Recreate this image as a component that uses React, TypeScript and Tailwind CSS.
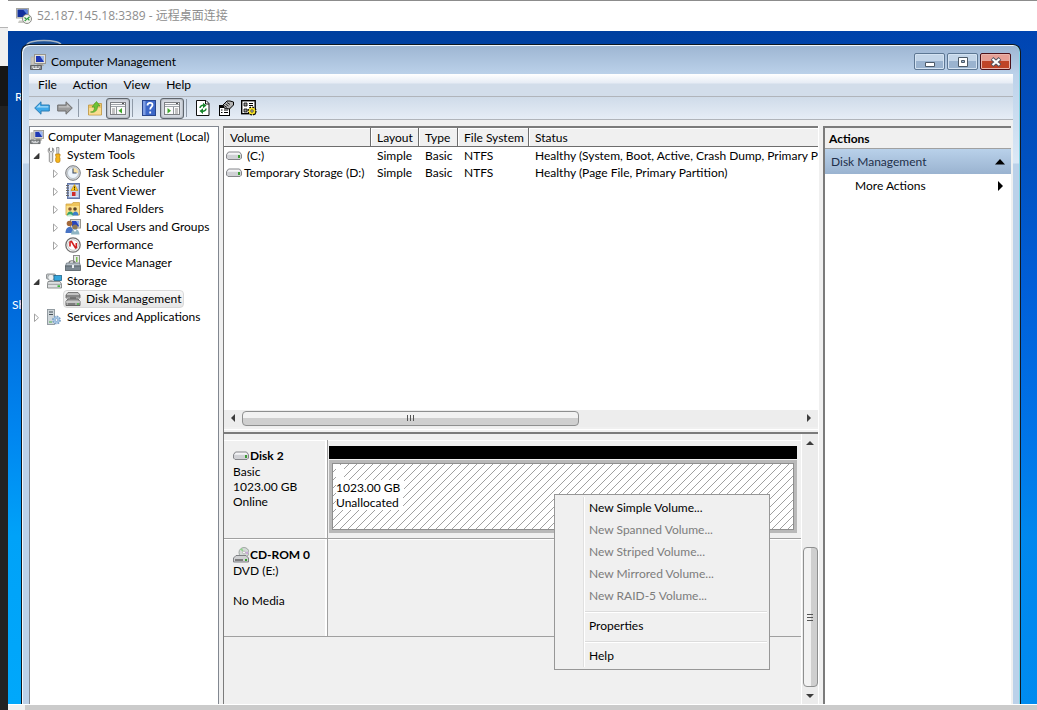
import type { ReactNode } from 'react';

type IconProps = { className?: string };

function Svg({ children, className = 'h-4 w-4 shrink-0', box = '0 0 16 16' }: { children: ReactNode; className?: string; box?: string }) {
  return (
    <svg viewBox={box} className={className} aria-hidden="true">
      {children}
    </svg>
  );
}

function RemoteIcon() {
  return (
    <Svg>
      <rect x="0.5" y="0.5" width="12" height="9.5" fill="#d9d9d6" stroke="#a5a5a0" />
      <rect x="1.5" y="1.5" width="10" height="7.5" fill="#12309c" />
      <path d="M7 1.5h4.5V7z" fill="#5b83dd" />
      <path d="M3 12.5h5V15H2z" fill="#c9c9c4" />
      <circle cx="11" cy="11" r="4.5" fill="#f4f4f0" stroke="#8b8b86" />
      <path d="M8.5 9.5l2 1.7-1.8 1.8M13.6 8.8l-2 1.7 1.8 1.8" fill="none" stroke="#2c9a3b" strokeWidth="1.2" />
    </Svg>
  );
}

function ComputerIcon({ className }: IconProps) {
  return (
    <Svg className={className}>
      <rect x="4.5" y="0.5" width="11" height="9" fill="#e4e2da" stroke="#98968e" />
      <rect x="6" y="2" width="8" height="6" fill="#1e38b4" />
      <path d="M10 2h4v6z" fill="#9db8ef" />
      <path d="M1 3h3v8H1z" fill="#c8c6be" stroke="#b5b3ac" strokeWidth="0.8" />
      <path d="M7 10h6l1 2H6z" fill="#aaa89f" />
      <path d="M.5 11.500h11v4H.5z" fill="#8c8f92" stroke="#5e6164" />
      <path d="M2 13h2M5 13h2M8.500 13h1.500M3 14.500h6" stroke="#e9ecee" />
    </Svg>
  );
}

function ToolsIcon() {
  return (
    <Svg>
      <path d="M3.500 0.800v3.200l1.500 1 1.500-1V0.800C8 1.600 8.500 4.500 6.700 6v8c0 2-3.400 2-3.400 0V6C1.500 4.500 2 1.600 3.500 0.800z" fill="#e6e6e6" stroke="#868686" strokeWidth="0.9" />
      <path d="M10.500 .5h2.500v2l-.5 5h-1.500l-.5-5z" fill="#d8d8d8" stroke="#777" strokeWidth="0.6" />
      <path d="M9.700 7h4.300v2l-.7 1 .7 1v3c0 2-4.300 2-4.300 0v-3l.7-1-.7-1z" fill="#f5b51c" stroke="#b77c0c" strokeWidth="0.7" />
    </Svg>
  );
}

function ClockIcon() {
  return (
    <Svg>
      <circle cx="8" cy="8" r="7.300" fill="#d8d8d8" stroke="#777b80" />
      <circle cx="8" cy="8" r="5.500" fill="#eef5fc" stroke="#a9b4bf" strokeWidth="0.7" />
      <path d="M8 8V2.800a5.200 5.200 0 0 1 5.200 5.200z" fill="#f6dfa2" />
      <path d="M8 3.500V8h3.500" fill="none" stroke="#3d4d68" strokeWidth="1.100" />
    </Svg>
  );
}

function EventIcon() {
  return (
    <Svg>
      <rect x="2.500" y="0.500" width="12" height="15" fill="#8fa3ce" stroke="#6477a6" />
      <rect x="4" y="2" width="9.500" height="12" fill="#dfe6f4" />
      <path d="M5 4h8M5 6h8M5 8h8M5 10h8M5 12h8" stroke="#9fb0d2" strokeWidth="0.700" />
      <path d="M1 2.500h3M1 5h3M1 7.500h3M1 10h3M1 12.500h3" stroke="#666" />
      <path d="M9.500 1.500L13 7.500H6z" fill="#fbc81e" stroke="#c48c08" strokeWidth="0.600" />
      <path d="M9.500 3.500v2M9.500 6.200v.8" stroke="#3b2e00" />
      <rect x="7" y="9" width="3.500" height="4" fill="#cf2b2b" />
    </Svg>
  );
}

function SharedIcon() {
  return (
    <Svg>
      <path d="M1 3h6l1-1.500h6.500V14H1z" fill="#efc55b" stroke="#d1a546" strokeWidth="0.800" />
      <path d="M1.500 5h12.500v8H1.500z" fill="#fbe08b" />
      <circle cx="5" cy="8" r="1.800" fill="#8a5a34" />
      <path d="M2 14.500c0-5.500 6.500-5.500 6.500 0z" fill="#35a36b" />
      <circle cx="10" cy="8" r="1.800" fill="#5c4527" />
      <path d="M7.500 14.500c0-5.500 6-5.500 6 0z" fill="#3d7fc9" />
      <path d="M2 15.500c1-3 5-3 6 0z" fill="#c5ecd6" />
    </Svg>
  );
}

function UsersIcon() {
  return (
    <Svg>
      <rect x="5.500" y="0.500" width="10" height="8.500" fill="#dcdcd6" stroke="#96968f" />
      <rect x="7" y="2" width="7" height="5.500" fill="#2745bd" />
      <path d="M11 2h3v5z" fill="#90aeec" />
      <circle cx="4.500" cy="4.500" r="2.800" fill="#a3683a" />
      <path d="M0.500 14c0-8 8-8 8 0z" fill="#4773c4" />
      <circle cx="10" cy="8" r="2.600" fill="#8f7a54" />
      <path d="M6 15.500c0-7 8.500-7 8.500 0z" fill="#8fb5c4" />
      <path d="M8.500 11l1.500 2 1.500-2z" fill="#fff" />
    </Svg>
  );
}

function PerfIcon() {
  return (
    <Svg>
      <circle cx="8" cy="8" r="7.200" fill="#f8f8f8" stroke="#6f6f6f" strokeWidth="1.300" />
      <circle cx="8" cy="8" r="5.300" fill="#fff" stroke="#b9b9b9" strokeWidth="0.800" />
      <path d="M5 9.500V5l1.500-.5L10.500 11l.8-.5V6" fill="none" stroke="#d21f1f" strokeWidth="1.600" />
    </Svg>
  );
}

function DeviceIcon() {
  return (
    <Svg>
      <rect x="8.500" y="0.500" width="6" height="8" fill="#e9e9e9" stroke="#8e8e8e" />
      <path d="M11 2h1.500v5H11z" fill="#7cc04f" />
      <path d="M4 8c0-3 6-3 6 0" fill="none" stroke="#777" strokeWidth="1.200" />
      <path d="M1.500 8h13l1 3H.5z" fill="#b7c0c8" stroke="#6e7880" strokeWidth="0.800" />
      <rect x="0.500" y="11" width="15" height="4.500" fill="#7b8791" stroke="#525c64" strokeWidth="0.800" />
      <path d="M7 10h2v3H7z" fill="#e8ecef" />
    </Svg>
  );
}

function StorageIcon() {
  return (
    <Svg>
      <rect x="0.500" y="1" width="9" height="5" rx="1" fill="#c9cdcf" stroke="#787d80" strokeWidth="0.800" />
      <circle cx="5" cy="4.500" r="3.200" fill="#eceff0" stroke="#8b9092" strokeWidth="0.700" />
      <rect x="8" y="2.500" width="7.500" height="5" fill="#34a5dc" stroke="#20658c" strokeWidth="0.800" />
      <path d="M2 8.500h12l1.500 2.500v4H1.500v-4z" fill="#dfe1e2" stroke="#74787a" strokeWidth="0.800" />
      <path d="M1.500 11.300h14" stroke="#9a9ea0" />
      <path d="M11.500 12.300h2.500v1.700h-2.500z" fill="#3fb53c" />
    </Svg>
  );
}

function DiskMgmtIcon() {
  return (
    <Svg>
      <path d="M3 1.500h10l2 2.500v3H1V4z" fill="#c3c3c3" stroke="#707070" strokeWidth="0.900" />
      <path d="M1 5h14M5 7h6" stroke="#4e4e4e" />
      <path d="M3 8h10l2 2.500v4H1v-4z" fill="#a8a8a8" stroke="#5b5b5b" strokeWidth="0.900" />
      <path d="M1 11h14" stroke="#e8e8e8" />
      <path d="M3 13h7" stroke="#555" />
      <path d="M12 12.300h2v1.400h-2z" fill="#4cb64a" />
    </Svg>
  );
}

function ServicesIcon() {
  return (
    <Svg>
      <rect x="1.500" y="0.500" width="7" height="15" fill="#cfd6da" stroke="#8a949a" strokeWidth="0.900" />
      <path d="M3 3h4M3 5.500h4" stroke="#47525a" strokeWidth="1.200" />
      <path d="M3 13h3" stroke="#4fae4c" />
      <circle cx="10.500" cy="11" r="3.500" fill="#bcd5ec" stroke="#7ba0c5" strokeWidth="1.800" strokeDasharray="1.700 1" />
      <circle cx="10.500" cy="11" r="2.800" fill="#a4c5e6" />
      <circle cx="10.500" cy="11" r="1.300" fill="#fff" stroke="#6b93bb" strokeWidth="0.600" />
    </Svg>
  );
}

function DriveIcon() {
  return (
    <Svg className="h-2.5 w-4 shrink-0" box="0 0 16 10">
      <path d="M2.500 1h11l2 2.500v3.500l-1.500 1.500H2L.5 7V3.500z" fill="#d0d1d5" stroke="#85868a" />
      <path d="M2.800 1.700h10.400l1.300 2H1.500z" fill="#f5f5f7" />
      <path d="M12 4h2v3h-2z" fill="#3c9b35" />
    </Svg>
  );
}

function CdIcon() {
  return (
    <Svg className="h-4 w-4 shrink-0">
      <circle cx="11" cy="5.500" r="5" fill="#d5dbd8" stroke="#8e9592" strokeWidth="0.800" />
      <path d="M11 5.500L7 2.500l2-1.500z" fill="#8fd58b" />
      <path d="M11 5.500l4-1v3z" fill="#c9a7d8" />
      <circle cx="11" cy="5.500" r="1.400" fill="#fff" stroke="#999" strokeWidth="0.600" />
      <path d="M3 8.500h10l2.500 2.500v4H.5v-4z" fill="#d0d1d3" stroke="#74767a" strokeWidth="0.900" />
      <path d="M2 13h8" stroke="#444" strokeWidth="1.200" />
      <path d="M12 12h2v2h-2z" fill="#35a02e" />
    </Svg>
  );
}

function ArrowIcon({ back }: { back?: boolean }) {
  return back ? (
    <Svg>
      <path d="M.7 8L7 1.800v3.200h8.300v6H7v3.200z" fill="#3fa9ea" stroke="#2b7cb4" />
      <path d="M2.500 7.500L6 4.300v2h8.300v1.200z" fill="#a9dcf8" />
    </Svg>
  ) : (
    <Svg>
      <path d="M15.300 8L9 1.800v3.200H.7v6H9v3.200z" fill="#9b9b9b" stroke="#6e6e6e" />
      <path d="M13.500 7.500L10 4.300v2H1.700v1.200z" fill="#c4c4c4" />
    </Svg>
  );
}

function UpFolderIcon() {
  return (
    <Svg>
      <path d="M1.500 5h5l1-1.500h7V15h-13z" fill="#eec66a" stroke="#bd9440" strokeWidth="0.800" />
      <path d="M2 8h12v6.500H2z" fill="#f9dc92" />
      <path d="M3.500 12c3 0 4-2 4-5H5l4.500-5.500L13 6h-2.500c0 5-3 7-7 6z" fill="#6cc335" stroke="#4f9b29" strokeWidth="0.700" />
    </Svg>
  );
}

function PaneIcon({ right }: { right?: boolean }) {
  return (
    <Svg>
      <rect x="0.500" y="2.500" width="15" height="12" fill="#fbfbfb" stroke="#7d8084" />
      <path d="M1 4.500h14M1 6.500h14" stroke="#a0a5aa" />
      <path d="M12 3.500h2" stroke="#555" />
      {right ? (
        <>
          <path d="M9.500 7v7" stroke="#90959a" />
          <path d="M11 9h3M11 11h3M11 13h3" stroke="#8a8a8a" />
          <path d="M3.500 8v5.500L7 10.700z" fill="#3fa62c" />
        </>
      ) : (
        <>
          <path d="M6.500 7v7" stroke="#90959a" />
          <path d="M2 9h3M2 11h3M2 13h3" stroke="#8a8a8a" />
          <path d="M12 8v5.500L8.500 10.700z" fill="#3fa62c" />
        </>
      )}
    </Svg>
  );
}

function HelpIcon() {
  return (
    <Svg>
      <rect x="1.500" y="0.500" width="13" height="15" fill="#3c67c8" stroke="#28458d" />
      <path d="M2 1h2.500v14H2z" fill="#7d9de3" />
      <path d="M6.500 5.500c0-3.500 5-3.500 5-.5 0 2-2.300 2-2.300 4.500M9.200 11.500v2" fill="none" stroke="#fff" strokeWidth="1.800" />
    </Svg>
  );
}

function RefreshIcon() {
  return (
    <Svg>
      <path d="M1.500.5h9.500l3 3V15.500H1.500z" fill="#fff" stroke="#111" />
      <path d="M10.500.5v3.500H14" fill="none" stroke="#111" />
      <path d="M5 8c0-2 2-3 4-2.500M11 8.500c0 2-2 3-4 2.500" fill="none" stroke="#16852c" strokeWidth="1.500" />
      <path d="M8 2.800l3.500 2.700-3.500 2.700zM8 8.300l-3.500 2.800L8 13.900z" fill="#16852c" />
    </Svg>
  );
}

function PropsIcon() {
  return (
    <Svg>
      <rect x="1.500" y="5.500" width="10" height="10" fill="#fff" stroke="#000" />
      <path d="M2 7h9" stroke="#000" strokeWidth="2" />
      <path d="M3 10h1.500M6 10h4M3 12.500h1.500M6 12.500h4" stroke="#000" />
      <path d="M5 5l4-4h3l3.500 1v3l-4 4-3-.5L6 8z" fill="#b4b4b4" stroke="#000" />
      <path d="M6 5.500l3 2M7.500 4l3 2M9 2.500l3 2" stroke="#000" strokeWidth="0.800" />
    </Svg>
  );
}

function SettingsIcon() {
  return (
    <Svg>
      <rect x="0.700" y="0.700" width="13.500" height="13" fill="#fff" stroke="#000" strokeWidth="1.400" />
      <path d="M3 3h3v3H3zM3 9h3v3H3z" fill="#999" stroke="#000" strokeWidth="0.800" />
      <path d="M8 3.500h4M8 5.500h4" stroke="#000" />
      <circle cx="11" cy="11" r="3.600" fill="#f5e02a" stroke="#000" strokeWidth="2" strokeDasharray="1.600 1.200" />
      <circle cx="11" cy="11" r="3.300" fill="#f5e02a" />
      <circle cx="11" cy="11" r="1.200" fill="#fff" stroke="#000" strokeWidth="0.700" />
    </Svg>
  );
}

function Expander({ state }: { state?: 'open' | 'closed' }) {
  return (
    <Svg className="h-3 w-3 shrink-0" box="0 0 12 12">
      {state === 'open' && <path d="M9 4.500V9.500H4z" fill="#3a3a3a" stroke="#222" strokeWidth="0.800" />}
      {state === 'closed' && <path d="M4.500 3v7.500l4-3.750z" fill="#fff" stroke="#a3a3a3" />}
    </Svg>
  );
}

function TreeItem({ indent, state, icon, label, selected }: { indent: string; state?: 'open' | 'closed'; icon: ReactNode; label: string; selected?: boolean }) {
  return (
    <li className={`flex h-[18px] items-center ${indent}`}>
      <Expander state={state} />
      <button
        className={`ml-0.5 flex h-[18px] items-center gap-[5px] rounded-sm border pr-0.5 pl-px whitespace-nowrap ${
          selected ? 'border-[#d9d9d9] bg-gradient-to-b from-[#f8f8f8] to-[#e6e6e6]' : 'border-transparent'
        }`}
      >
        {icon}
        {label}
      </button>
    </li>
  );
}

function ToolSeparator() {
  return <span className="mr-1 ml-0.5 h-[18px] w-px bg-[#8f9aa8]" />;
}

function ToolButton({ label, pressed, children }: { label: string; pressed?: boolean; children: ReactNode }) {
  return (
    <button
      aria-label={label}
      className={`flex h-[21px] items-center justify-center rounded-[3px] border ${
        pressed ? 'w-6 border-[#5f666e] bg-[#d5dae1] shadow-[inset_0_0_2px_#70777f]' : 'w-[23px] border-transparent'
      }`}
    >
      {children}
    </button>
  );
}

function ScrollArrow({ label, d, className }: { label: string; d: string; className: string }) {
  return (
    <button aria-label={label} className={`flex shrink-0 items-center justify-center ${className}`}>
      <Svg className="h-2 w-2" box="0 0 8 8">
        <path d={d} fill="#3c3c3c" />
      </Svg>
    </button>
  );
}

const volumes = [
  { name: '\u00a0(C:)', status: 'Healthy (System, Boot, Active, Crash Dump, Primary Partition)' },
  { name: 'Temporary Storage (D:)', status: 'Healthy (Page File, Primary Partition)' },
];

function HeaderCell({ children, className = '' }: { children: ReactNode; className?: string }) {
  return (
    <th
      scope="col"
      className={`h-[19px] overflow-hidden border-r border-b border-[#6d6d6d] bg-[#f0f0f0] p-0 pt-0.5 pl-1.5 text-left font-normal whitespace-nowrap shadow-[inset_1px_1px_0_#fff] ${className}`}
    >
      {children}
    </th>
  );
}

function VolumeList() {
  return (
    <section className="flex min-h-0 flex-[307] flex-col border-t-2 border-l border-[#7b7b7b] bg-white">
      <div className="min-h-0 flex-1 overflow-hidden">
        <table className="w-full table-fixed border-separate border-spacing-0">
          <colgroup>
            <col className="w-[147px]" />
            <col className="w-12" />
            <col className="w-[39px]" />
            <col className="w-[71px]" />
            <col />
          </colgroup>
          <thead>
            <tr>
              <HeaderCell>Volume</HeaderCell>
              <HeaderCell>Layout</HeaderCell>
              <HeaderCell>Type</HeaderCell>
              <HeaderCell>File System</HeaderCell>
              <HeaderCell className="border-r-0">Status</HeaderCell>
            </tr>
          </thead>
          <tbody>
            {volumes.map((v) => (
              <tr key={v.name} className="h-[17px] whitespace-nowrap">
                <td className="p-0 pl-0.5">
                  <span className="flex items-center gap-0.5">
                    <DriveIcon />
                    {v.name}
                  </span>
                </td>
                <td className="p-0 pl-1.5">Simple</td>
                <td className="p-0 pl-1.5">Basic</td>
                <td className="p-0 pl-1.5">NTFS</td>
                <td className="overflow-hidden p-0 pl-1.5">{v.status}</td>
              </tr>
            ))}
          </tbody>
        </table>
      </div>
      <div className="flex h-[17px] shrink-0 items-center bg-[#ededed]">
        <ScrollArrow label="Scroll left" d="M6 0v8L2 4z" className="h-4 w-[18px]" />
        <div className="flex h-[15px] flex-[337] items-center justify-center gap-0.5 rounded-sm border border-[#8e8f8f] bg-gradient-to-b from-[#f2f2f2] from-50% to-[#cfcfcf] to-50%">
          <span className="h-1.5 w-px bg-[#555]" />
          <span className="h-1.5 w-px bg-[#555]" />
          <span className="h-1.5 w-px bg-[#555]" />
        </div>
        <div className="flex-[222]" />
        <ScrollArrow label="Scroll right" d="M2 0v8l4-4z" className="h-4 w-[18px]" />
      </div>
      <div className="h-[7px] shrink-0 border-b-2 border-[#7b7b7b] bg-[#f0f0f0] pt-0.5">
        <div className="h-px bg-white" />
      </div>
    </section>
  );
}

function ContextMenu() {
  const items = ['Simple', 'Spanned', 'Striped', 'Mirrored', 'RAID-5'];
  return (
    <div role="menu" className="absolute top-[60px] left-[330px] w-[216px] border border-[#979797] bg-[#f0f0f0] p-0.5">
      <div className="ml-[26px] border-l border-[#e0e0e0]">
        <div className="border-l border-white">
          {items.map((n, i) => (
            <button key={n} role="menuitem" disabled={i > 0} className="block h-[22px] w-full pl-1 text-left text-black disabled:text-[#7c7c7c]">
              New {n} Volume...
            </button>
          ))}
          {['Properties', 'Help'].map((n) => (
            <div key={n} className="pt-2">
              <div className="relative">
                <hr className="absolute -top-1 right-0 left-0 h-0.5 border-t border-b border-t-[#dcdcdc] border-b-white" />
                <button role="menuitem" className="block h-[22px] w-full pl-1 text-left">
                  {n}
                </button>
              </div>
            </div>
          ))}
        </div>
      </div>
    </div>
  );
}

function DiskLabel({ icon, title, lines }: { icon: ReactNode; title: string; lines: string[] }) {
  return (
    <div className="w-[104px] shrink-0 border-r border-b border-[#a0a0a0] pt-2 pl-[9px] shadow-[inset_-2px_1px_0_#fff]">
      <h3 className="flex h-4 items-center gap-px font-bold whitespace-nowrap">
        {icon}
        {title}
      </h3>
      {lines.map((l, i) => (
        <p key={i} className="h-[15px] leading-[15px]">
          {l}
        </p>
      ))}
    </div>
  );
}

function DiskView() {
  return (
    <section className="relative flex min-h-0 flex-[271] border-l border-[#7b7b7b] bg-[#f0f0f0]">
      <div className="flex min-w-0 flex-1 flex-col pt-1.5">
        <div className="flex h-[99px]">
          <DiskLabel icon={<DriveIcon />} title="Disk 2" lines={['Basic', '1023.00 GB', 'Online']} />
          <div className="flex min-w-0 flex-1 flex-col border-b border-[#a0a0a0] pt-1.5 pr-1 pb-[5px] pl-px shadow-[inset_0_1px_0_#fff]">
            <div className="h-[13px] shrink-0 bg-black" />
            <div className="relative mt-px min-h-0 flex-1 border-[3px] border-[#b9b9b9]">
              <svg className="absolute inset-0 h-full w-full border border-[#8f8f8f] bg-white" aria-hidden="true">
                <defs>
                  <pattern id="hatch" width="8" height="8" patternUnits="userSpaceOnUse">
                    <path
                      d="M0 7h1v1H0zM1 6h1v1H1zM2 5h1v1H2zM3 4h1v1H3zM4 3h1v1H4zM5 2h1v1H5zM6 1h1v1H6zM7 0h1v1H7z"
                      fill="#a0a0a0"
                      shapeRendering="crispEdges"
                    />
                  </pattern>
                </defs>
                <rect width="100%" height="100%" fill="url(#hatch)" />
              </svg>
              <div className="absolute top-0.5 left-1 flex flex-col items-start leading-[15px]">
                <span className="h-[15px] w-2 bg-white" />
                <span className="h-[15px] bg-white pr-1">1023.00 GB</span>
                <span className="h-[15px] bg-white pr-1">Unallocated</span>
              </div>
            </div>
          </div>
        </div>
        <div className="flex h-[98px]">
          <DiskLabel icon={<CdIcon />} title="CD-ROM 0" lines={['DVD (E:)', '', 'No Media']} />
          <div className="flex-1 border-b border-[#a0a0a0] shadow-[inset_0_1px_0_#fff]" />
        </div>
      </div>
      <div className="flex w-[17px] shrink-0 flex-col items-center border-l border-white bg-[#ececec]">
        <ScrollArrow label="Scroll up" d="M0 6h8L4 2z" className="h-[18px] w-4" />
        <div className="flex-[96]" />
        <div className="flex w-[15px] flex-[139] flex-col items-center justify-center gap-0.5 rounded-sm border border-[#8e8f8f] bg-gradient-to-r from-[#f2f2f2] from-50% to-[#cfcfcf] to-50%">
          <span className="h-px w-1.5 bg-[#555]" />
          <span className="h-px w-1.5 bg-[#555]" />
          <span className="h-px w-1.5 bg-[#555]" />
        </div>
        <ScrollArrow label="Scroll down" d="M0 2h8L4 6z" className="h-[17px] w-4" />
      </div>
      <ContextMenu />
    </section>
  );
}

function ActionsPane() {
  return (
    <aside className="flex w-[188px] shrink-0 flex-col border-t-2 border-l-2 border-[#7b7b7b] bg-white">
      <h2 className="h-[21px] border-b border-[#a0a0a0] bg-[#f0f0f0] pl-1 leading-[21px] font-bold">Actions</h2>
      <button className="flex h-[25px] items-center justify-between bg-gradient-to-b from-[#b9d1ea] to-[#9ab3d0] pr-1.5 pl-1.5 text-[#1e2f4a]">
        Disk Management
        <Svg className="h-2.5 w-2.5" box="0 0 10 10">
          <path d="M0 7.500h10L5 2z" fill="#000" />
        </Svg>
      </button>
      <button className="flex h-6 items-center justify-between pr-1.5 pl-[30px]">
        More Actions
        <Svg className="h-2.5 w-2.5" box="0 0 10 10">
          <path d="M3 0v10l5-5z" fill="#000" />
        </Svg>
      </button>
    </aside>
  );
}

function WindowButton({ label, close, children }: { label: string; close?: boolean; children: ReactNode }) {
  return (
    <button
      aria-label={label}
      className={`flex h-[17px] w-[31px] items-center justify-center rounded-[2px] border ${
        close
          ? 'border-[#4d1119] bg-gradient-to-b from-[#e6a096] from-50% to-[#bf4428] to-50% shadow-[inset_0_0_0_1px_#e9b5ac]'
          : 'border-[#5d7793] bg-gradient-to-b from-[#c3d5e8] from-50% to-[#9ab3cf] to-50% shadow-[inset_0_0_0_1px_#d4e3f2]'
      }`}
    >
      <Svg className="h-3 w-3" box="0 0 12 12">
        {children}
      </Svg>
    </button>
  );
}

function ManagementWindow() {
  return (
    <main className="relative flex flex-1 flex-col rounded-t-lg border border-b-0 border-[#101820] bg-[linear-gradient(#9db5d2_0px,#bcd2ea_30px,#dbe8f6_118px,#bbd1e9_119px)] px-[7px] shadow-[inset_1px_1px_0_#f2f8fd,inset_-1px_0_0_#7fd6e6]">
      <header className="flex h-[29px] shrink-0 items-center justify-between pt-1 pr-0.5">
        <h1 className="flex items-center gap-[5px] pl-px">
          <ComputerIcon />
          Computer Management
        </h1>
        <div className="flex gap-0.5">
          <WindowButton label="Minimize">
            <path d="M1.500 6.500h9v4h-9z" fill="#fff" stroke="#4c5a68" />
          </WindowButton>
          <WindowButton label="Maximize">
            <path d="M1.500 1.500h9v9h-9z" fill="#fff" stroke="#4c5a68" />
            <path d="M4.500 4.500h3v2h-3z" fill="#9ab3cf" stroke="#4c5a68" />
          </WindowButton>
          <WindowButton label="Close" close>
            <path d="M2 2.500L10 9.500M10 2.500L2 9.500" stroke="#51535f" strokeWidth="4" />
            <path d="M2.500 3L9.500 9M9.500 3L2.500 9" stroke="#fff" strokeWidth="2.200" />
          </WindowButton>
        </div>
      </header>
      <div className="flex min-h-0 flex-1 flex-col bg-[#f0f0f0]">
        <nav className="flex h-[23px] shrink-0 items-center gap-4 border-b border-[#b0b4ba] bg-[linear-gradient(#ffffff_0px,#e6ecf5_9px,#d2ddea_10px)] pl-[9px]">
          {['File', 'Action', 'View', 'Help'].map((m) => (
            <button key={m}>{m}</button>
          ))}
        </nav>
        <div role="toolbar" className="flex h-[23px] shrink-0 items-center border-b border-[#b0b4ba] bg-gradient-to-b from-[#cfdbe9] to-[#e6edf6] pl-px">
          <ToolButton label="Back"><ArrowIcon back /></ToolButton>
          <ToolButton label="Forward"><ArrowIcon /></ToolButton>
          <ToolSeparator />
          <ToolButton label="Up one level"><UpFolderIcon /></ToolButton>
          <ToolButton label="Console tree" pressed><PaneIcon /></ToolButton>
          <ToolSeparator />
          <ToolButton label="Help topics"><HelpIcon /></ToolButton>
          <ToolButton label="Action pane" pressed><PaneIcon right /></ToolButton>
          <ToolSeparator />
          <ToolButton label="Refresh"><RefreshIcon /></ToolButton>
          <ToolButton label="Properties"><PropsIcon /></ToolButton>
          <ToolButton label="Settings"><SettingsIcon /></ToolButton>
        </div>
        <div className="flex min-h-0 flex-1 gap-1 pt-1.5 pr-0.5">
          <aside className="w-[190px] shrink-0 overflow-hidden border border-b-0 border-[#828790] bg-white pt-px">
            <div className="flex h-[18px] items-center gap-1 whitespace-nowrap">
              <ComputerIcon className="h-4 w-3.5 shrink-0" />
              Computer Management (Local)
            </div>
            <ul>
              <TreeItem indent="" state="open" icon={<ToolsIcon />} label="System Tools" />
              <TreeItem indent="pl-[19px]" state="closed" icon={<ClockIcon />} label="Task Scheduler" />
              <TreeItem indent="pl-[19px]" state="closed" icon={<EventIcon />} label="Event Viewer" />
              <TreeItem indent="pl-[19px]" state="closed" icon={<SharedIcon />} label="Shared Folders" />
              <TreeItem indent="pl-[19px]" state="closed" icon={<UsersIcon />} label="Local Users and Groups" />
              <TreeItem indent="pl-[19px]" state="closed" icon={<PerfIcon />} label="Performance" />
              <TreeItem indent="pl-[19px]" icon={<DeviceIcon />} label="Device Manager" />
              <TreeItem indent="" state="open" icon={<StorageIcon />} label="Storage" />
              <TreeItem indent="pl-[19px]" icon={<DiskMgmtIcon />} label="Disk Management" selected />
              <TreeItem indent="" state="closed" icon={<ServicesIcon />} label="Services and Applications" />
            </ul>
          </aside>
          <div className="flex min-w-0 flex-1 flex-col border-r border-white">
            <VolumeList />
            <DiskView />
          </div>
          <ActionsPane />
        </div>
      </div>
    </main>
  );
}

export default function App() {
  return (
    <div className="flex h-screen overflow-hidden bg-white font-[Lato,'Noto_Sans',sans-serif] text-[12px] leading-4 text-black">
      <div className="flex w-2 shrink-0 flex-col bg-[#222222]">
        <div className="h-7 border-b border-[#b5b5b5] bg-white" />
        <div className="h-[38px] bg-[#f0f0f0]" />
        <div className="h-10 bg-[#161616]" />
      </div>
      <div className="flex min-w-0 flex-1 flex-col">
        <div className="flex h-[31px] shrink-0 items-center gap-[5px] border-t border-[#8c8c8c] bg-white pl-2 text-[12px] text-[#8e8e8e]">
          <RemoteIcon />
          <span className="font-['Open_Sans','Noto_Sans_CJK_SC',sans-serif]">52.187.145.18:3389 - 远程桌面连接</span>
        </div>
        <div className="relative flex min-h-0 flex-1 bg-[linear-gradient(90deg,#0000_60%,#0050d855),linear-gradient(#003f9f_0%,#0052b5_20%,#0066d8_38%,#0086f0_60%,#00a2f8_75%,#00a8fb_100%)] pt-[13px] pr-4 pl-[13px]">
          <Svg className="absolute top-2 left-[18px] h-6 w-9" box="0 0 36 24">
            <ellipse cx="18" cy="6" rx="17" ry="4.500" fill="#1c4f94" stroke="#a9b6c4" strokeWidth="1.500" />
          </Svg>
          <span className="absolute top-[58px] left-[7px] text-white">R</span>
          <span className="absolute top-[266px] left-1 text-white">Sh</span>
          <ManagementWindow />
        </div>
        <div className="flex h-1.5 shrink-0 border-t border-white bg-[#cbcbcb]">
          <div className="w-[17px] bg-[#f0f0f0]" />
        </div>
      </div>
    </div>
  );
}
